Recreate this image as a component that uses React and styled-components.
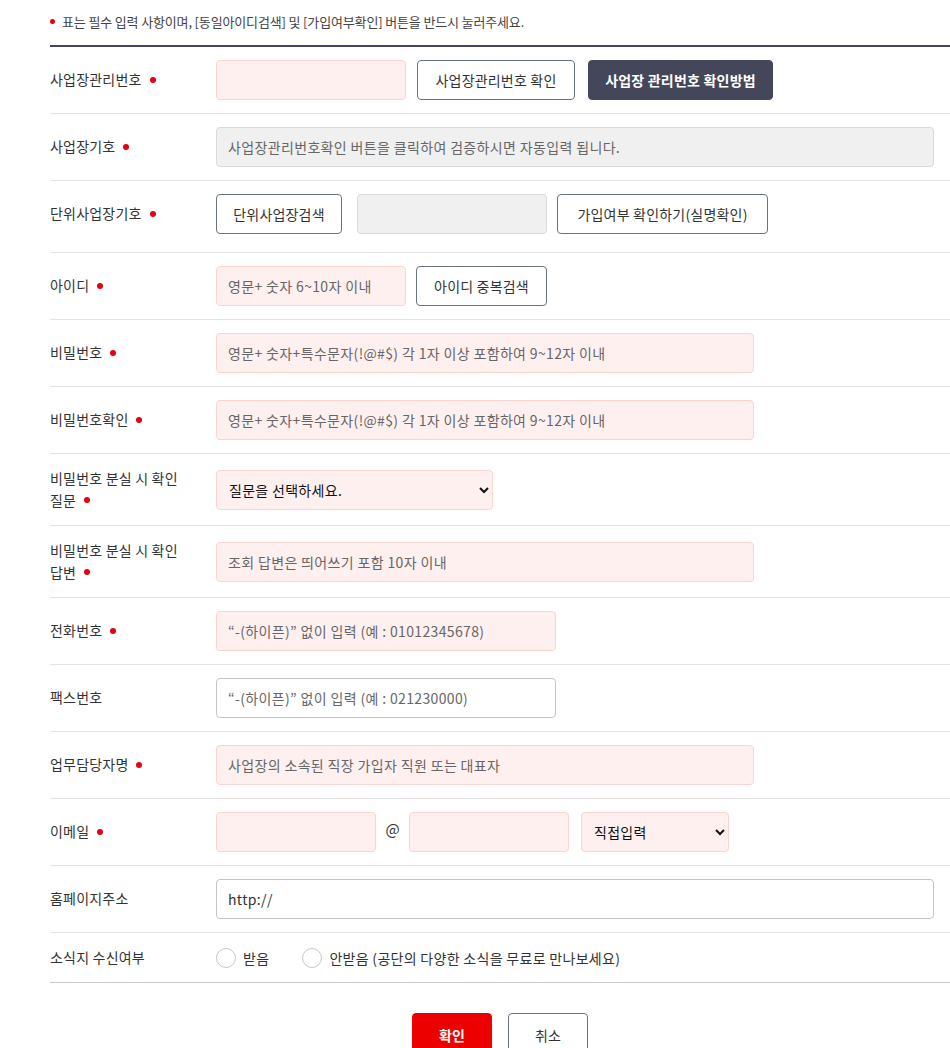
import styled, { createGlobalStyle } from "styled-components";

const GlobalStyle = createGlobalStyle`
    body {
        margin: 0;
        background: #fff;
        font-family: "Noto Sans CJK KR", "Noto Sans", sans-serif;
        color: #333;
    }
    * { box-sizing: border-box; }
`

const Page = styled.div`
    padding-left: 50px;
    width: 950px;
`

const Notice = styled.p`
    margin: 0;
    padding: 13px 0 14px;
    font-size: 13px;
    line-height: 18px;
    color: #444;
    letter-spacing: -0.15px;
`

const Dot = styled.span`
    display: inline-block;
    width: ${props => props.$small ? "5px" : "6px"};
    height: ${props => props.$small ? "5px" : "6px"};
    border-radius: 50%;
    background: #e60012;
    vertical-align: middle;
    margin: ${props => props.$small ? "-3px 7px 0 0" : "-3px 0 0 8px"};
`

const Form = styled.div`
    border-top: 2px solid #44465a;
`

const Row = styled.div`
    display: flex;
    align-items: center;
    padding: ${props => props.$pad || "13px 0"};
    border-bottom: 1px solid ${props => props.$last ? "#c8c8c8" : "#e3e3e3"};
`

const Label = styled.div`
    flex: 0 0 166px;
    padding-right: 30px;
    font-size: 14px;
    line-height: 21.5px;
    letter-spacing: 0.2px;
    color: #333;
`

const Field = styled.div`
    display: flex;
    align-items: center;
`

const Input = styled.input`
    width: ${props => props.$w}px;
    height: 40px;
    margin-right: ${props => props.$mr || 0}px;
    padding: 0 11px;
    border-radius: 4px;
    font-family: inherit;
    font-size: 14px;
    letter-spacing: 0.35px;
    color: #333;
    outline: none;
    border: 1px solid ${props => props.$variant === "gray" ? "#dadada" : props.$variant === "white" ? "#c4c4c4" : "#fdd3d0"};
    background: ${props => props.$variant === "gray" ? "#f0f0f0" : props.$variant === "white" ? "#fff" : "#fff0f0"};

    &::placeholder {
        color: #666;
    }
`

const Select = styled.select`
    width: ${props => props.$w}px;
    height: 40px;
    padding: 0 8px;
    border: 1px solid #fdd3d0;
    border-radius: 4px;
    background: #fff0f0;
    font-family: inherit;
    font-size: 14px;
    letter-spacing: 0.3px;
    color: #111;
    outline: none;
`

const Button = styled.button`
    height: ${props => props.$h || 40}px;
    width: ${props => props.$w}px;
    margin-right: ${props => props.$mr || 0}px;
    padding: 0;
    border-radius: 4px;
    font-family: inherit;
    font-size: 14px;
    letter-spacing: 0.2px;
    cursor: pointer;
    border: 1px solid ${props => props.$primary ? "#ec0000" : props.$dark ? "#44465a" : "#6b7280"};
    background: ${props => props.$primary ? "#ec0000" : props.$dark ? "#44465a" : "#fff"};
    color: ${props => props.$primary || props.$dark ? "#fff" : "#333"};
    font-weight: ${props => props.$dark || props.$primary ? 600 : 400};
`

const At = styled.span`
    width: 33px;
    text-align: center;
    font-size: 15px;
    color: #333;
    margin-top: -8px;
`

const RadioLabel = styled.label`
    display: flex;
    align-items: center;
    margin-right: ${props => props.$mr || 0}px;
    font-size: 14px;
    line-height: 24px;
    letter-spacing: 0.3px;
    color: #333;
    cursor: pointer;
`

const Radio = styled.input`
    appearance: none;
    width: 20px;
    height: 20px;
    margin: 0 7px 0 0;
    border: 1px solid #c8c8c8;
    border-radius: 50%;
    background: #fff;
`

const Actions = styled.div`
    display: flex;
    justify-content: center;
    gap: 16px;
    margin-top: 30px;
`

export default function App() {
    return (
        <Page>
            <GlobalStyle />
            <Notice>
                <Dot $small />표는 필수 입력 사항이며, [동일아이디검색] 및 [가입여부확인] 버튼을 반드시 눌러주세요.
            </Notice>
            <Form>
                <Row>
                    <Label>사업장관리번호<Dot /></Label>
                    <Field>
                        <Input $w={190} $mr={11} />
                        <Button $w={158} $mr={13}>사업장관리번호 확인</Button>
                        <Button $w={185} $dark>사업장 관리번호 확인방법</Button>
                    </Field>
                </Row>
                <Row>
                    <Label>사업장기호<Dot /></Label>
                    <Field>
                        <Input $w={718} $variant="gray" readOnly placeholder="사업장관리번호확인 버튼을 클릭하여 검증하시면 자동입력 됩니다." />
                    </Field>
                </Row>
                <Row $pad="13px 0 18px">
                    <Label>단위사업장기호<Dot /></Label>
                    <Field>
                        <Button $w={126} $mr={15}>단위사업장검색</Button>
                        <Input $w={190} $mr={10} $variant="gray" readOnly />
                        <Button $w={211}>가입여부 확인하기(실명확인)</Button>
                    </Field>
                </Row>
                <Row>
                    <Label>아이디<Dot /></Label>
                    <Field>
                        <Input $w={190} $mr={10} placeholder="영문+ 숫자 6~10자 이내" />
                        <Button $w={131}>아이디 중복검색</Button>
                    </Field>
                </Row>
                <Row>
                    <Label>비밀번호<Dot /></Label>
                    <Field>
                        <Input $w={538} type="text" placeholder="영문+ 숫자+특수문자(!@#$) 각 1자 이상 포함하여 9~12자 이내" />
                    </Field>
                </Row>
                <Row>
                    <Label>비밀번호확인<Dot /></Label>
                    <Field>
                        <Input $w={538} type="text" placeholder="영문+ 숫자+특수문자(!@#$) 각 1자 이상 포함하여 9~12자 이내" />
                    </Field>
                </Row>
                <Row $pad="14px 0">
                    <Label>비밀번호 분실 시 확인 질문<Dot /></Label>
                    <Field>
                        <Select $w={277}>
                            <option>질문을 선택하세요.</option>
                        </Select>
                    </Field>
                </Row>
                <Row $pad="14px 0">
                    <Label>비밀번호 분실 시 확인 답변<Dot /></Label>
                    <Field>
                        <Input $w={538} placeholder="조회 답변은 띄어쓰기 포함 10자 이내" />
                    </Field>
                </Row>
                <Row>
                    <Label>전화번호<Dot /></Label>
                    <Field>
                        <Input $w={340} placeholder="“-(하이픈)” 없이 입력 (예 : 01012345678)" />
                    </Field>
                </Row>
                <Row>
                    <Label>팩스번호</Label>
                    <Field>
                        <Input $w={340} $variant="white" placeholder="“-(하이픈)” 없이 입력 (예 : 021230000)" />
                    </Field>
                </Row>
                <Row>
                    <Label>업무담당자명<Dot /></Label>
                    <Field>
                        <Input $w={538} placeholder="사업장의 소속된 직장 가입자 직원 또는 대표자" />
                    </Field>
                </Row>
                <Row>
                    <Label>이메일<Dot /></Label>
                    <Field>
                        <Input $w={160} />
                        <At>@</At>
                        <Input $w={160} $mr={12} />
                        <Select $w={148}>
                            <option>직접입력</option>
                        </Select>
                    </Field>
                </Row>
                <Row>
                    <Label>홈페이지주소</Label>
                    <Field>
                        <Input $w={718} $variant="white" defaultValue="http://" />
                    </Field>
                </Row>
                <Row $pad="13px 0 12px" $last>
                    <Label>소식지 수신여부</Label>
                    <Field>
                        <RadioLabel $mr={33}>
                            <Radio type="radio" name="news" />받음
                        </RadioLabel>
                        <RadioLabel>
                            <Radio type="radio" name="news" />안받음 (공단의 다양한 소식을 무료로 만나보세요)
                        </RadioLabel>
                    </Field>
                </Row>
            </Form>
            <Actions>
                <Button $w={80} $h={44} $primary>확인</Button>
                <Button $w={80} $h={44}>취소</Button>
            </Actions>
        </Page>
    )
}
